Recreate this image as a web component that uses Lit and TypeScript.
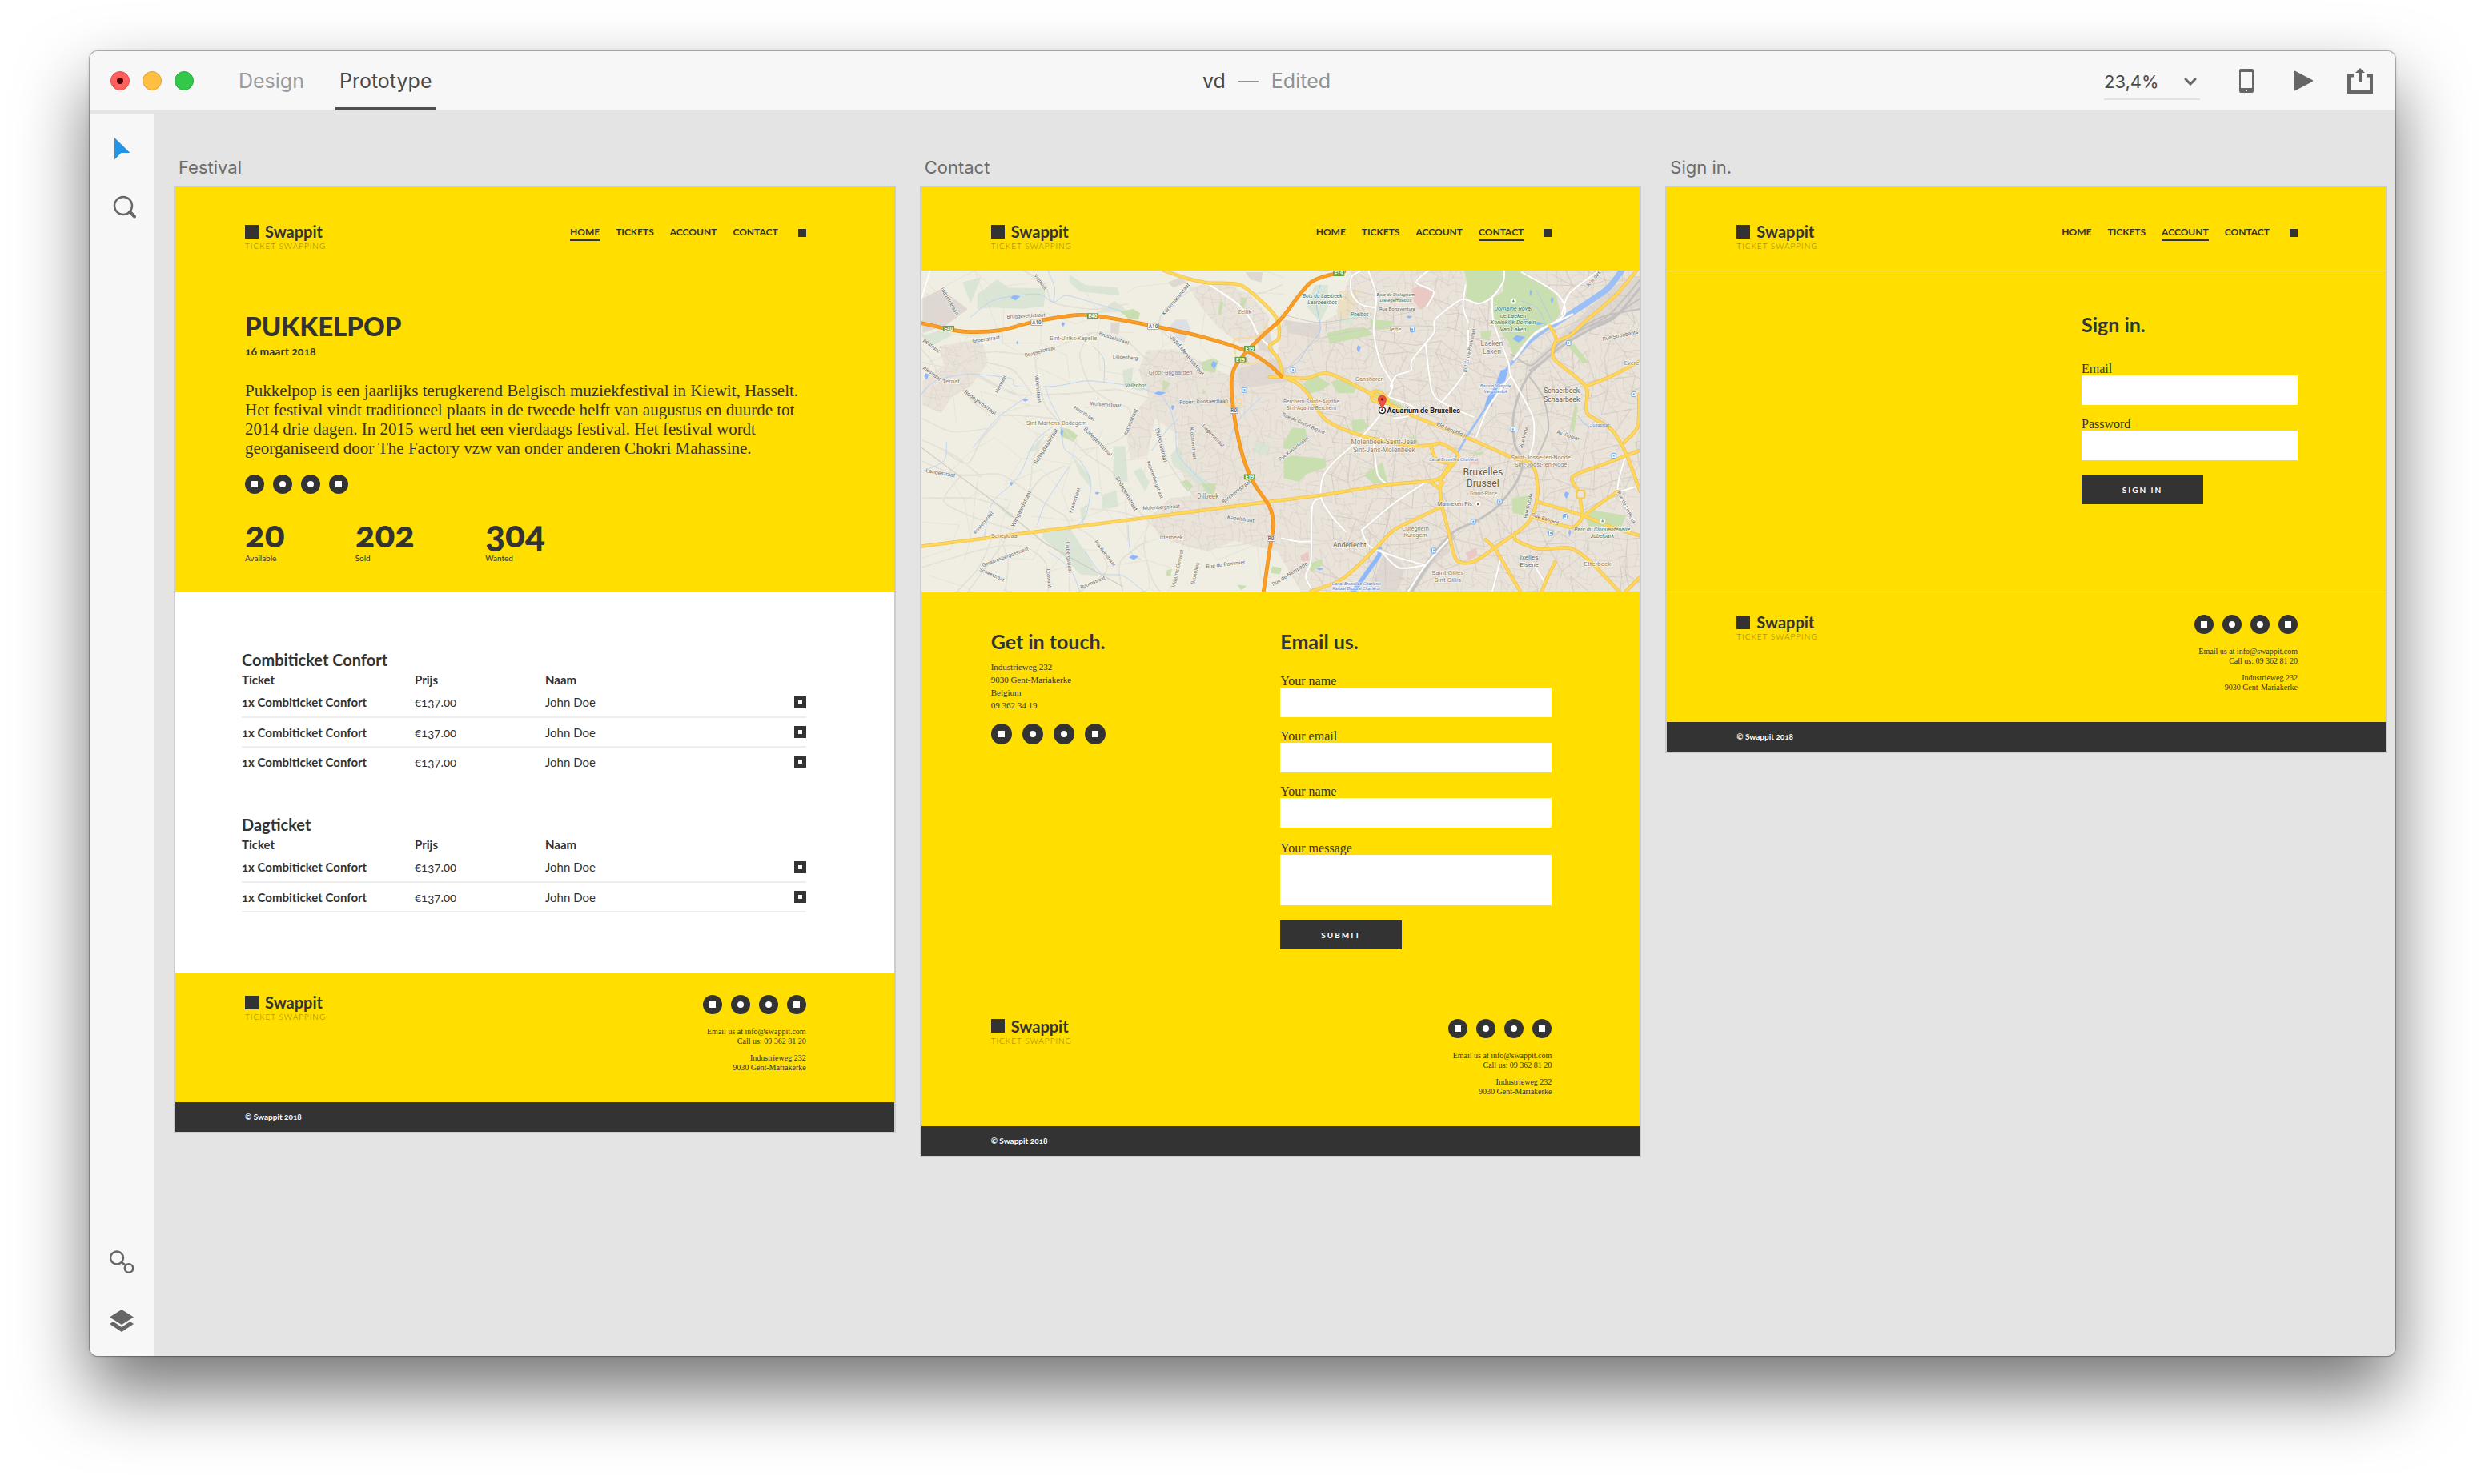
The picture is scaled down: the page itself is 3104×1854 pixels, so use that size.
import { LitElement, html, svg, css } from "lit";
import { customElement, property } from "lit/decorators.js";
import { classMap } from "lit/directives/class-map.js";

const sans = css`Lato, "Open Sans", sans-serif`;
const serif = css`"Liberation Serif", serif`;

type Point = [number, number];

/* ---------- Geometry helpers for the street map ---------- */

function parse(points: string): Point[] {
  return points.split(" ").map((p) => p.split(",").map(Number) as Point);
}

/* Catmull-Rom spline through the points, written as cubic curves. */
function smooth(points: string, dx = 0): string {
  const p = parse(points).map(([x, y]) => [x + dx, y] as Point);
  let d = `M${p[0][0]},${p[0][1]}`;
  for (let i = 0; i < p.length - 1; i++) {
    const a = p[i - 1] ?? p[i];
    const b = p[i];
    const c = p[i + 1];
    const e = p[i + 2] ?? c;
    const t = 7;
    d += `C${b[0] + (c[0] - a[0]) / t},${b[1] + (c[1] - a[1]) / t} ${c[0] - (e[0] - b[0]) / t},${c[1] - (e[1] - b[1]) / t} ${c[0]},${c[1]}`;
  }
  return d;
}

/* Irregular mesh of small streets inside a rectangle. */
function mesh(x0: number, y0: number, x1: number, y1: number, step: number, keep: number, seed: number): string {
  let s = seed;
  const rnd = () => {
    s = (s * 16807) % 2147483647;
    return s / 2147483647;
  };
  const cols = Math.ceil((x1 - x0) / step);
  const rows = Math.ceil((y1 - y0) / step);
  const grid: Point[][] = [];
  for (let r = 0; r <= rows; r++) {
    const row: Point[] = [];
    for (let c = 0; c <= cols; c++) {
      const x = x0 + c * step + (rnd() - 0.5) * step * 0.9 + Math.sin(r / 3) * step * 0.5;
      const y = y0 + r * step + (rnd() - 0.5) * step * 0.9 + Math.sin(c / 4) * step * 0.7;
      row.push([Math.round(x), Math.round(y)]);
    }
    grid.push(row);
  }
  let d = "";
  for (let r = 0; r < rows; r++) {
    for (let c = 0; c < cols; c++) {
      const [x, y] = grid[r][c];
      if (rnd() < keep) d += `M${x},${y}L${grid[r][c + 1].join()}`;
      if (rnd() < keep) d += `M${x},${y}L${grid[r + 1][c].join()}`;
      if (rnd() < keep * 0.2) d += `M${x},${y}L${grid[r + 1][c + 1].join()}`;
    }
  }
  return d;
}

const EAST = 1356;
const URBAN =
  "M850,305L960,300 1060,350 1160,400 1200,330 1280,290 1340,330 1356,200 1500,205 1600,150 1590,90 1620,6 2700,6 2700,1210 1430,1210 1340,1060 1180,1020 1080,1060 1000,1040 900,1010 860,930 940,860 1020,850 980,760 965,620 880,560 855,700 790,715 770,600 800,540 860,480 820,380Z" +
  "M1010,70L1140,50 1240,100 1310,180 1300,260 1200,280 1120,220 1060,150Z" +
  "M70,290L230,260 255,350 190,440 120,480 80,540 10,510 10,420 90,360Z";

const westStreets = [
  "6,240 60,300 100,330 140,375 200,390 280,430 370,472 600,465 740,452 880,490 1000,500 1160,480 1356,430",
  "6,350 180,390 290,440 380,475", "430,310 440,400 470,510 510,560 540,600 620,690 720,760 770,850 850,940 920,1000 1040,1045 1200,1035 1356,990",
  "135,375 190,330 280,310 400,320 520,290 640,240 760,260 830,320 900,380 1000,410 1150,405 1200,460",
  "500,560 380,550 280,545 200,500 150,430", "510,600 430,700 410,830 350,970 260,1100 180,1209",
  "6,720 150,775 300,770 410,840 500,900 560,960 560,1209", "780,130 650,150 500,125 470,60 390,6", "6,300 60,380 6,470",
  "1080,50 1000,90 920,150 900,220 990,310 1070,400", "880,480 900,600 930,720 1010,830 1100,880 1230,820",
  "620,520 750,510 790,540 770,620 700,660 600,680", "6,640 130,700 230,780", "150,780 90,870 200,930 380,990",
  "300,560 230,640 180,730 100,690", "540,740 460,780 410,840", "640,900 740,910 830,935", "640,240 600,320 640,440 720,500",
  "6,860 200,860 330,900", "480,1209 470,1100 380,1040 240,1050 6,1120", "600,1209 700,1130 660,1020 590,970",
  "1120,560 1090,640 1140,720 1220,760", "860,940 840,1040 870,1160 900,1209", "760,1209 750,1100 850,1020",
  "300,1000 330,1100 320,1209", "140,1209 220,1120 270,1010", "1356,60 1280,90 1150,90", "6,560 120,610 250,600", "420,470 350,380 250,350",
];

const streams = [
  "190,180 270,120 360,100 450,95 500,125 550,100 660,130 760,160", "500,125 505,70 480,6", "6,470 60,420 180,395 340,410 360,440 500,440 620,420 690,425 800,440 900,470",
  "470,440 490,500 530,580 540,670 600,720 640,800 620,930 560,980", "690,425 690,340 650,290", "960,610 940,530 900,465",
  "500,590 430,650 380,760 340,810 270,880 240,1010", "620,1060 680,1140 760,1150 840,1209", "870,680 930,600 970,560",
  "960,610 970,700 1060,800 1100,850", "600,1209 560,1120 480,1060", "100,650 90,720 6,760", "780,960 790,1060 830,1090",
  "1160,640 1200,560 1280,480", "200,670 290,560 400,480", "440,960 470,880 560,740",
];

const lightGreen =
  "M215,95L290,38 330,70 470,72 465,140 380,150 270,145 215,150ZM560,20L620,60 740,70 750,100 600,85 560,50ZM660,165L730,120 780,160ZM6,250L100,225 120,250 40,290Z" +
  "M760,380L800,370 795,420 860,440 830,460 765,440ZM725,665L770,665 780,800 725,790ZM940,700L970,660 990,720 1090,810 1060,830 1000,770 950,740ZM800,760L830,745 860,800 845,835ZM460,990L560,970 620,1060 670,1150 600,1145 540,1080 460,1010Z" +
  "M685,850L735,830 745,890 680,900ZM570,700L640,780 640,820 600,770ZM400,690L470,620 440,680ZM290,890L350,920 340,935ZM1255,650L1310,650 1310,700 1250,690ZM600,900L630,880 610,960ZM1480,60L1530,60 1530,140 1500,200 1450,140Z" +
  "M1560,150L1640,170 1620,210 1570,200ZM160,50L230,30 190,130Z";
const parks =
  "M750,160L800,150 825,165 820,190 780,185ZM1055,350L1100,335 1120,345 1105,390 1060,380ZM910,415L940,430 910,465ZM525,595L560,600 592,625 575,648 535,630ZM975,800L1000,790 1025,815 1005,835ZM1055,805L1110,805 1105,845 1075,840ZM1125,122L1138,125 1128,175 1118,170ZM1205,105L1225,110 1215,150 1198,145Z" +
  "M1320,1115L1356,1120 1350,1145 1315,1140ZM1190,1185L1225,1188 1205,1205ZM1060,450L1075,460 1060,470ZM925,1130L945,1125 940,1150 925,1150Z";
const eastParks =
  "M790,110L830,85 835,6 900,6 960,40 1030,100 1045,170 1000,220 900,285 870,330 850,270 800,210ZM685,6L832,6 830,60 790,108 730,132 690,105 695,55ZM170,240L250,222 310,218 345,245 260,265 180,280ZM80,430L125,395 182,432 150,455 100,470ZM185,425L240,408 283,440 270,465 210,466Z" +
  "M8,650L40,595 90,600 95,640 50,680 10,672ZM8,710L40,700 165,712 165,745 95,768 65,798 8,785ZM262,568L305,563 325,590 300,612 265,608ZM310,772L378,725 400,810 340,800ZM863,860L935,848 915,925 866,915ZM1140,935L1168,905 1290,925 1275,965 1150,965ZM745,235L790,230 780,262 748,260ZM330,190L420,195 410,225 340,230Z" +
  "M470,640L500,625 515,655 470,660ZM100,1105L150,1088 155,1110 110,1135ZM1085,590L1100,500 1110,520 1095,620ZM1075,290L1095,280 1150,350 1130,355ZM335,470L365,460 480,530 470,545ZM385,900L410,890 400,915ZM700,690L760,685 745,700Z";
const pinks = "M488,75L530,58 572,85 562,130 520,152 495,120ZM690,1065L730,1045 735,1075 700,1092ZM70,1075L100,1060 105,1095 75,1095ZM700,705L740,710 740,735 705,730Z";

const whiteRoads = [
  "300,6 262,30 262,90 295,132 350,145", "325,6 355,100 345,230 370,350 415,430 400,480 375,540 290,640 200,720 155,780 148,860 190,930 240,985",
  "550,6 505,50 570,85 545,140", "835,6 830,50 790,105 740,130 690,115 660,122 575,190 570,240 490,340 485,380 430,400 408,440",
  "540,280 565,460 620,510 720,555", "790,110 795,200 850,350 860,400 940,550 945,640 930,700", "860,400 775,520 730,630",
  "900,12 1030,90 1060,170 940,250 870,340", "148,860 115,890 110,1090 90,1150 110,1195", "475,1209 540,1110 630,1010",
  "1290,700 1260,830 1320,940", "300,980 420,880 540,800", "300,980 330,1040 430,1080 540,1110", "400,480 490,515 480,550 420,560",
  "1190,6 1080,90 1050,170", "345,640 360,770 400,810", "0,1010 60,1022 110,1022", "370,1055 440,1120 540,1110", "690,60 680,140 700,200",
  "1090,170 1060,185 950,240 880,330", "820,1090 790,1209", "940,1100 990,1180", "600,500 690,380 700,230", "1250,840 1344,812",
];

const yellowRoads = [
  smooth("6,1040 560,970 1330,870 1506,848 1746,810 1916,795 1961,780"),
  smooth("915,6 1000,35 1080,52 1200,60 1290,130 1340,190 1345,260 1310,290 1345,340 1361,400"),
  ...[
    "-46,405 0,405 90,410 150,392 200,400 330,465 480,545 690,630 860,705 940,735 960,840 925,950 800,1045 720,1097 655,1090 625,980 600,880 597,790 635,730",
    "0,385 10,405 60,430 100,470 165,565 300,625 480,662 560,660 600,655 660,695 640,735 600,780 565,800 590,820 605,800", "560,665 580,715 640,730",
    "1330,6 1250,100 1135,200 1080,250 1035,268", "1005,215 1028,260 1020,335 1140,440 1145,540 1235,600 1290,690 1344,835", "1140,440 1240,400 1344,345",
    "1340,470 1335,590 1285,650", "1344,680 1200,735 1090,780 1115,840 1128,930", "955,872 1130,925 1240,970 1344,1000", "1128,930 1180,890 1260,835",
    "940,930 1080,968 1115,950 1128,930", "765,1015 800,1050 860,1150 895,1209", "875,990 880,1018 965,1050 1080,1047 1150,1090 1200,1140 1265,1209",
    "1025,1100 995,1160 975,1209", "1344,1155 1290,1209", "600,892 520,930 420,980 350,1050 230,1160 110,1209", "335,470 350,458 375,465 400,490", "335,470 345,495 400,505",
  ].map((p) => smooth(p, EAST)),
];

const orangeRoads = [
  smooth("6,203 90,222 170,235 300,230 440,195 600,172 700,182 880,215 1060,255 1230,310 1310,360 1356,403"),
  smooth("1590,10 1466,50 1356,185 1290,245 1225,310 1180,370 1168,430 1180,560 1210,700 1250,800 1310,890 1325,960 1310,1060 1288,1212"),
];

/* text, x, y, size, tone, rotation */
type Label = [string, number, number, number, string, number];
const labels: Label[] = [
  ["Vrijthout", 452, 55, 18, "road", 55], ["Industrielaan", 112, 128, 20, "road", 60], ["Bruggeveldstraat", 398, 182, 19, "road", -3],
  ["Kortemansstraat", 960, 120, 20, "road", -50], ["Zellik", 1217, 167, 22, "town", 0], ["Groenstraat", 248, 270, 20, "road", -8],
  ["Sint-Ulriks-Kapelle", 575, 268, 22, "town", 0], ["Brusselstraat", 728, 266, 20, "road", 18], ["Brusselstraat", 450, 316, 20, "road", -15],
  ["Lindenberg", 770, 338, 19, "road", 4], ["Jozef Mertensstraat", 1002, 330, 21, "road", 51], ["Groot-Bijgaarden", 940, 396, 22, "town", 0],
  ["pestraat", 44, 294, 20, "road", 38], ["piestraat", 46, 398, 20, "road", 38], ["Ternat", 117, 430, 23, "town", 0], ["Heirbaan", 304, 436, 19, "road", -64],
  ["Molenstraat", 443, 455, 20, "road", 84], ["Vallenbos", 810, 443, 19, "wood", 0], ["Robert Dansaertlaan", 1064, 504, 20, "road", -2],
  ["Bodegemstraat", 226, 508, 21, "road", 36], ["Wolsemstraat", 697, 515, 19, "road", 4], ["Heerstraat", 616, 548, 19, "road", 32],
  ["Kattenstraat", 790, 580, 19, "road", -68], ["Sint-Martens-Bodegem", 512, 586, 22, "town", 0], ["Bodegemstraat", 668, 655, 21, "road", 46],
  ["Schepdaalstraat", 472, 672, 21, "road", -58], ["Stationsstraat", 905, 668, 21, "road", 76], ["Kloosterstraat", 1025, 660, 19, "road", 84],
  ["Liegemstraat", 1100, 632, 19, "road", 46], ["Langestraat", 78, 772, 21, "road", 10], ["Keperenbergstraat", 882, 796, 18, "road", 70],
  ["Dilbeek", 1080, 862, 25, "town", 0], ["Berchemstraat", 1186, 842, 20, "road", -38], ["Bodegemstraat", 775, 850, 21, "road", 60],
  ["Kraanstraat", 580, 874, 19, "road", -72], ["Molenbergstraat", 905, 900, 19, "road", -3], ["Wijngaardstraat", 380, 906, 21, "road", -64],
  ["Kapelstraat", 1203, 944, 20, "road", 8], ["Kosterstraat", 238, 958, 19, "road", -50], ["Schepdaal", 318, 1009, 22, "town", 0],
  ["Itterbeek", 943, 1014, 22, "town", 0], ["Geraardsbergsestraat", 320, 1086, 19, "road", -20], ["Lisbergstraat", 558, 1088, 20, "road", 84],
  ["Plankenstraat", 694, 1072, 19, "road", 52], ["Rue du Pommier", 1146, 1114, 20, "road", -7], ["Scheestraat", 270, 1152, 19, "road", 24],
  ["Lostraat", 484, 1166, 19, "road", 84], ["Roomstraat", 648, 1182, 19, "road", -22], ["Vlaams Gewest", 966, 1130, 21, "town", -77],
  ["Bruxelles", 1032, 1148, 21, "town", -77], ["Rue des", 1170 + EAST, 42, 20, "road", -50], ["Bois du Laerbeek", 153 + EAST, 107, 20, "wood", 0],
  ["Laarbeekbos", 153 + EAST, 131, 20, "wood", 0], ["Bois de Dieleghem", 428 + EAST, 102, 18, "wood", 0], ["Dielegemsebos", 428 + EAST, 122, 18, "wood", 0],
  ["Rue Bonaventure", 434 + EAST, 155, 18, "road", 0], ["Poelbos", 293 + EAST, 178, 19, "wood", 0], ["Jette", 424 + EAST, 233, 22, "town", 0],
  ["Domaine Royal", 868 + EAST, 157, 22, "wood", 0], ["de Laeken", 868 + EAST, 182, 22, "wood", 0], ["Koninklijk Domein", 868 + EAST, 208, 22, "wood", 0],
  ["Van Laken", 868 + EAST, 234, 22, "wood", 0], ["Laeken", 788 + EAST, 288, 26, "town", 0], ["Laken", 788 + EAST, 317, 26, "town", 0],
  ["Bld Emile Bockstael", 704 + EAST, 312, 19, "road", -78], ["Rue Stroobants", 1270 + EAST, 256, 20, "road", -12], ["Evere", 1312 + EAST, 361, 23, "town", 0],
  ["Ganshoren", 330 + EAST, 420, 22, "town", 0], ["Bassin Vergote", 803 + EAST, 445, 18, "water", 0], ["Vergotedok", 803 + EAST, 465, 18, "water", 0],
  ["Schaerbeek", 1050 + EAST, 466, 26, "city", 0], ["Schaarbeek", 1050 + EAST, 497, 26, "city", 0], ["Berchem-Sainte-Agathe", 111 + EAST, 504, 20, "town", 0],
  ["Sint-Agatha-Berchem", 111 + EAST, 529, 20, "town", 0], ["Rue de Grand-Bigard", 82 + EAST, 586, 19, "road", 24], ["Bld Leopold II", 638 + EAST, 611, 20, "road", 23],
  ["Josaphat", 1192 + EAST, 592, 18, "water", 0], ["Rue Verte", 908 + EAST, 638, 19, "road", -74], ["Av. Rogier", 1074 + EAST, 631, 20, "road", 18],
  ["Molenbeek-Saint-Jean", 384 + EAST, 657, 25, "town", 0], ["Sint-Jans-Molenbeek", 384 + EAST, 687, 25, "town", 0], ["Rue Kasterlinden", 45 + EAST, 680, 18, "road", -38],
  ["Canal Bruxelles Charleroi", 644 + EAST, 720, 17, "water", 0], ["Saint-Josse-ten-Noode", 972 + EAST, 715, 22, "town", 0], ["Sint-Joost-ten-Node", 972 + EAST, 740, 22, "town", 0],
  ["Bruxelles", 755 + EAST, 775, 37, "city", 0], ["Brussel", 755 + EAST, 817, 37, "city", 0],
  ["Grand-Place", 757 + EAST, 850, 19, "town", 0], ["Manneken Pis", 649 + EAST, 888, 21, "road", 0], ["Rue Ducale", 924 + EAST, 894, 19, "road", -76],
  ["Rue Belliard", 988 + EAST, 944, 20, "rust", 18], ["Rue de Linthout", 1292 + EAST, 900, 19, "road", 64], ["Parc du Cinquantenaire", 1202 + EAST, 983, 21, "wood", 0],
  ["Jubelpark", 1202 + EAST, 1008, 21, "wood", 0], ["Cureghem", 502 + EAST, 981, 22, "town", 0], ["Kuregem", 502 + EAST, 1006, 22, "town", 0],
  ["Anderlecht", 255 + EAST, 1043, 26, "city", 0], ["Ixelles", 928 + EAST, 1088, 24, "city", 0], ["Elsene", 928 + EAST, 1117, 24, "city", 0],
  ["Etterbeek", 1184 + EAST, 1114, 24, "town", 0], ["Saint-Gilles", 623 + EAST, 1145, 24, "town", 0], ["Sint-Gillis", 623 + EAST, 1174, 24, "town", 0],
  ["Rue de Neerpede", 30 + EAST, 1150, 20, "road", -32], ["Canal Bruxelles-Charleroi", 280 + EAST, 1185, 17, "water", 0], ["Kanaal Brussel Charleroi", 280 + EAST, 1203, 17, "water", 0],
];

const greenShields: [string, number, number][] = [["E40", 108, 223], ["E40", 648, 176], ["E19", 1236, 298], ["E19", 1202, 340], ["E19", 1236, 780], ["E19", 214 + EAST, 17]];
const whiteShields: [string, number, number][] = [["A10", 438, 200], ["A10", 875, 215], ["R0", 1177, 531], ["R0", 1316, 1011]];
const stations: Point[] = [[1217, 454], [1399, 379], [1846, 227], [2432, 278], [2676, 470], [2223, 602], [2601, 701], [2174, 873], [2419, 929], [2075, 948], [2365, 991], [1927, 1056]];
const ponds: [number, number, number, number][] = [[358, 108, 18, 10], [25, 403, 9, 13], [900, 467, 22, 8], [948, 520, 7, 10], [802, 1082, 18, 9], [343, 806, 7, 8], [665, 841, 10, 5], [537, 208, 7, 9], [1103, 360, 12, 15], [396, 492, 12, 5], [365, 277, 4, 7], [532, 615, 6, 16], [1645, 300, 8, 14], [2245, 262, 24, 14], [2270, 190, 10, 4], [2424, 848, 10, 14], [2436, 990, 5, 14], [1835, 180, 12, 5], [1500, 1125, 14, 5], [2370, 118, 6, 12], [2320, 205, 22, 6], [2290, 90, 5, 12]];

@customElement("city-map")
export class CityMap extends LitElement {
  static styles = css`
    :host { display: block; }
    svg { display: block; width: 100%; height: auto; font-family: Roboto, sans-serif; }
    .road { fill: #6b6964; }
    .town { fill: #94805f; }
    .city { fill: #6d5c42; }
    .wood { fill: #3f7558; font-style: italic; }
    .water { fill: #5b82c4; font-style: italic; }
    .rust { fill: #99602b; }
    .halo { stroke: #fff; stroke-opacity: 0.65; stroke-width: 4px; paint-order: stroke; }
    .shield { fill: #fff; font-weight: 700; }
    .line { fill: none; stroke-linejoin: round; stroke-linecap: round; }
  `;

  render() {
    return svg`
      <svg viewBox="6 6 2694 1203" preserveAspectRatio="xMidYMid slice" role="img" aria-label="Map of Brussels">
        <defs><clipPath id="urban"><path d=${URBAN} /></clipPath></defs>
        <rect x="0" y="0" width="2710" height="1220" fill="#f0eee2" />
        <path d=${URBAN} fill="#eae3da" />
        <path d="M10,110L80,75 180,150 100,210 10,240ZM1190,375L1340,335 1400,420 1200,450ZM1360,190L1500,210 1500,265 1380,240ZM1255,240L1310,230 1330,320 1270,300ZM715,200L750,200 745,245 715,240ZM930,50L980,30 1000,50 950,70ZM1220,12L1285,12 1280,50 1240,40ZM1960,1010L1990,1060 1900,1120ZM1740,1050L1820,1120 1790,1209 1680,1209 1720,1120ZM2600,60L2700,30 2700,140 2560,200 2420,280 2320,360 2260,380 2380,270Z" fill="#dfd8d2" />
        <path d=${lightGreen} fill="#dae5d6" />
        <path d=${parks} fill="#c9dfaf" />
        <path d="M940,210L960,190 1000,190 1015,225 990,275 955,260Z" fill="#dcdfe4" />
        <path d="M1570,85L1650,75 1640,130 1600,190 1565,180Z" fill="#ecdfc2" />
        <g clip-path="url(#urban)">
          <path class="line" d=${mesh(760, 0, 2700, 1210, 27, 0.62, 41)} stroke="#d9d1c8" stroke-width="2" />
          <path class="line" d=${mesh(1500, 0, 2700, 1210, 70, 0.6, 7)} stroke="#d0c8c0" stroke-width="2.5" />
          <path class="line" d=${mesh(0, 260, 260, 560, 22, 0.6, 99)} stroke="#ddd5cb" stroke-width="2" />
        </g>
        <path class="line" d=${mesh(0, 0, 1300, 1210, 105, 0.45, 1234)} stroke="#e0ddd2" stroke-width="2" />
        <path class="line" d=${westStreets.map((s) => smooth(s)).join("")} stroke="#d6d2c8" stroke-width="4" />
        <path class="line" d=${westStreets.map((s) => smooth(s)).join("")} stroke="#f8f7f2" stroke-width="1.5" />
        <path class="line" d=${streams.map((s) => smooth(s)).join("")} stroke="#b3cff5" stroke-width="2.5" />
        <path class="line" d="M6,670L300,890L470,1030L760,1190" stroke="#cfccc4" stroke-width="4" />
        <path class="line" d=${smooth("6,110 25,50 38,6")} stroke="#fff" stroke-width="5" />
        <path class="line" d=${smooth("1080,55 1190,130 1240,190 1270,250 1310,290")} stroke="#fff" stroke-width="6" />
        <g transform="translate(1356 0)">
          <path d=${eastParks} fill="#c9dfaf" />
          <path d=${pinks} fill="#eac9c5" />
          <path class="line" d=${smooth("0,395 130,270 260,235 420,215 560,215 660,230 730,290") + smooth("330,1209 400,930 420,760 440,600") + smooth("0,170 100,195 160,200 300,180")} stroke="#cfcbc6" stroke-width="3" />
          <path class="line" d=${smooth("1344,70 1250,180 1150,230 1050,290 960,365 925,400 890,470 868,560 875,660 905,720 880,800 810,890 740,940 640,990 560,1090 490,1209")} stroke="#c3c1bf" stroke-width="9" />
          <path class="line" d=${smooth("1344,40 1230,170 1120,230 1010,300 940,360 905,350 860,320") + smooth("1344,150 1200,180 1060,260 1000,330 930,380") + smooth("1344,110 1220,190 1080,240") + smooth("925,400 980,480 1000,600 960,700")} stroke="#c3c1bf" stroke-width="6" />
          <path class="line" d=${smooth("640,1005 590,1050 560,1090 500,1180 475,1209")} stroke="#c6c3c1" stroke-width="22" opacity="0.7" />
          <path class="line" d=${smooth("1275,6 1220,75 1110,150 1020,208")} stroke="#9bbff7" stroke-width="22" />
          <path class="line" d=${smooth("1020,208 930,275 850,368 835,385")} stroke="#9bbff7" stroke-width="11" />
          <path d="M822,380L850,376 838,420 812,440 788,516 760,518 772,480 800,440Z" fill="#8fb8fb" />
          <path class="line" d=${smooth("768,516 730,575 700,620 660,690 640,735 605,778 560,800")} stroke="#9bbff7" stroke-width="8" />
          <path class="line" d=${smooth("368,1050 365,1075 340,1110 290,1180 270,1209")} stroke="#8fb8fb" stroke-width="16" />
          <path class="line" d=${smooth("145,60 130,130 145,230 100,290 60,350 0,380") + smooth("900,120 960,150 990,210") + smooth("955,80 990,150 1010,190") + smooth("1110,550 1150,590 1230,590")} stroke="#a9c8f5" stroke-width="3" />
          <path class="line" d=${whiteRoads.map((s) => smooth(s)).join("")} stroke="#ddd8d0" stroke-width="9" />
          <path class="line" d=${whiteRoads.map((s) => smooth(s)).join("")} stroke="#fff" stroke-width="6" />
        </g>
        <path class="line" d="M1180,300Q1160,250 1230,260Q1290,250 1300,210M1180,290Q1180,390 1290,340M1145,500Q1150,520 1180,515Q1210,520 1205,490Q1190,480 1180,515" stroke="#f6d9a0" stroke-width="6" />
        <path class="line" d=${yellowRoads.join("")} stroke="#eec04f" stroke-width="13" />
        <path class="line" d=${yellowRoads.join("")} stroke="#ffd75a" stroke-width="9" />
        <rect x="2462" y="830" width="30" height="30" rx="8" fill="#eae3da" stroke="#f6cb52" stroke-width="7" />
        <path class="line" d=${orangeRoads.join("")} stroke="#e98d1b" stroke-width="14" />
        <path class="line" d=${orangeRoads.join("")} stroke="#fa9e25" stroke-width="10" />
        ${ponds.map(([x, y, w, h]) => svg`<path d="M${x - w},${y}L${x - w / 3},${y - h} ${x + w},${y - h / 2} ${x + w / 2},${y + h / 3} ${x},${y + h}Z" fill="#8fb8fb" />`)}
        ${stations.map(([x, y]) => svg`<rect x=${x - 8} y=${y - 9} width="16" height="18" rx="3" fill="#fff" stroke="#6aa9ea" stroke-width="3" /><rect x=${x - 3} y=${y - 4} width="6" height="7" fill="#6aa9ea" />`)}
        ${labels.map(([text, x, y, size, tone, turn]) => svg`<text class="halo ${tone}" x=${x} y=${y} font-size=${size} text-anchor="middle" transform="rotate(${turn} ${x} ${y - size / 3})">${text}</text>`)}
        ${greenShields.map(([text, x, y]) => svg`<rect x=${x - 21} y=${y - 10} width="42" height="20" fill="#6b9c46" /><text class="shield" x=${x} y=${y + 7} font-size="19" text-anchor="middle">${text}</text>`)}
        ${whiteShields.map(([text, x, y]) => svg`<rect x=${x - text.length * 7} y=${y - 11} width=${text.length * 14} height="22" fill="#fff" stroke="#8a8782" stroke-width="2" /><text class="road" x=${x} y=${y + 7} font-size="19" font-weight="700" text-anchor="middle">${text}</text>`)}
        ${[[2225, 121], [2559, 946]].map(([x, y]) => svg`<circle cx=${x} cy=${y} r="12" fill="#fff" stroke="#b5cf9b" stroke-width="2" /><path d="M${x},${y - 8}l5,11h-10Z" fill="#6fae3c" />`)}
        <circle cx="2093" cy="881" r="12" fill="#fff" stroke="#c9bdb0" stroke-width="2" /><rect x="2089" y="877" width="8" height="9" fill="#92643a" />
        <circle cx="1733" cy="530" r="12" fill="#fff" stroke="#222" stroke-width="4" />
        <circle cx="1733" cy="530" r="4" fill="#222" />
        <path d="M1733,526C1731,512 1718,504 1718,489A15,15 0 0 1 1748,489C1748,504 1735,512 1733,526Z" fill="#ee4f43" stroke="#b5362c" stroke-width="2" />
        <circle cx="1733" cy="489" r="5" fill="#7a1812" />
        <text class="halo" x="1751" y="539" font-size="27" font-weight="700" fill="#111">Aquarium de Bruxelles</text>
      </svg>
    `;
  }
}

@customElement("social-dots")
export class SocialDots extends LitElement {
  @property({ type: Boolean, reflect: true }) large = false;

  static styles = css`
    :host { display: flex; gap: 11px; }
    :host([large]) { gap: 13px; }
    .dot { display: grid; place-items: center; width: 24px; height: 24px; border-radius: 50%; background: #333; }
    :host([large]) .dot { width: 26px; height: 26px; }
    .mark { width: 8px; height: 8px; background: #fff; }
    .round { border-radius: 50%; }
  `;

  render() {
    return ["Facebook", "Twitter", "Instagram", "YouTube"].map(
      (name, i) => html`<a class="dot" href="#" aria-label=${name}><span class=${classMap({ mark: true, round: i === 1 || i === 2 })}></span></a>`,
    );
  }
}

@customElement("brand-logo")
export class BrandLogo extends LitElement {
  static styles = css`
    :host { display: block; font-family: ${sans}; color: #333; }
    .name { display: flex; align-items: center; gap: 8px; font-size: 20px; line-height: 18px; font-weight: 700; }
    .square { width: 17px; height: 17px; background: #333; }
    .tag { padding-top: 2px; font-size: 10px; line-height: 14px; letter-spacing: 1px; color: #8f7d06; font-weight: 300; }
  `;

  render() {
    return html`
      <div class="name"><span class="square"></span>Swappit</div>
      <div class="tag">TICKET SWAPPING</div>
    `;
  }
}

@customElement("site-header")
export class SiteHeader extends LitElement {
  @property() active = "";

  static styles = css`
    :host { display: block; font-family: ${sans}; }
    .bar { display: flex; justify-content: space-between; align-items: flex-start; height: 104px; box-sizing: border-box; padding: 46px 110px 0 87px; }
    nav { display: flex; align-items: center; gap: 20px; }
    a { padding: 2px 0 1px; border-bottom: 2px solid transparent; color: #333; font-size: 12px; line-height: 16px; font-weight: 700; text-decoration: none; }
    .current { border-color: #333; }
    .menu { width: 10px; height: 10px; margin-left: 5px; padding: 0; border: 0; background: #333; }
  `;

  render() {
    return html`
      <header class="bar">
        <brand-logo></brand-logo>
        <nav>
          ${["HOME", "TICKETS", "ACCOUNT", "CONTACT"].map((t) => html`<a href="#" class=${classMap({ current: t === this.active })}>${t}</a>`)}
          <button class="menu" aria-label="Menu"></button>
        </nav>
      </header>
    `;
  }
}

@customElement("site-footer")
export class SiteFooter extends LitElement {
  static styles = css`
    :host { display: block; color: #333; }
    .main { display: flex; justify-content: space-between; align-items: flex-start; height: 162px; box-sizing: border-box; padding: 28px 110px 0 87px; }
    .info { display: flex; flex-direction: column; align-items: flex-end; font: 10px/12px ${serif}; text-align: right; }
    p { margin: 0 0 9px; }
    social-dots { margin-bottom: 16px; }
    .legal { padding: 0 87px; background: #333; color: #fff; font: 700 10px/37px ${sans}; font-variant-numeric: oldstyle-nums; }
  `;

  render() {
    return html`
      <footer>
        <div class="main">
          <brand-logo></brand-logo>
          <div class="info">
            <social-dots></social-dots>
            <p>Email us at info@swappit.com<br />Call us: 09 362 81 20</p>
            <p>Industrieweg 232<br />9030 Gent-Mariakerke</p>
          </div>
        </div>
        <div class="legal">© Swappit 2018</div>
      </footer>
    `;
  }
}

@customElement("ticket-table")
export class TicketTable extends LitElement {
  @property() heading = "";
  @property({ type: Number }) rows = 0;
  @property({ type: Boolean, reflect: true }) closed = false;

  static styles = css`
    :host { display: block; font-family: ${sans}; color: #333; font-variant-numeric: oldstyle-nums; }
    table { width: 100%; table-layout: fixed; border-collapse: collapse; font-size: 15px; }
    caption { font-size: 20px; line-height: 24px; font-weight: 700; text-align: left; }
    th, td { padding: 0; text-align: left; font-weight: 400; }
    thead th { height: 23px; font-weight: 700; vertical-align: bottom; line-height: 20px; }
    tbody tr { height: 37px; border-bottom: 2px solid #eee; }
    tbody tr:last-child { border-bottom-color: transparent; }
    :host([closed]) tbody tr:last-child { border-bottom-color: #eee; }
    tbody th { font-weight: 700; }
    .ticket { width: 216px; }
    .price { width: 163px; }
    .action { width: 40px; }
    .open { display: grid; place-items: center; width: 15px; height: 15px; margin-left: auto; padding: 0; border: 0; background: #333; }
    .open::after { content: ""; width: 5px; height: 5px; background: #fff; }
  `;

  render() {
    return html`
      <table>
        <caption>${this.heading}</caption>
        <thead>
          <tr><th class="ticket">Ticket</th><th class="price">Prijs</th><th>Naam</th><td class="action"></td></tr>
        </thead>
        <tbody>
          ${Array.from({ length: this.rows }, () => html`
            <tr>
              <th>1x Combiticket Confort</th><td>€137.00</td><td>John Doe</td>
              <td><button class="open" aria-label="Open ticket"></button></td>
            </tr>`)}
        </tbody>
      </table>
    `;
  }
}

@customElement("app-root")
export class AppRoot extends LitElement {
  static styles = css`
    :host { display: flex; min-height: 100vh; box-sizing: border-box; padding: 64px 112px 160px; background: #fff; font-family: Inter, sans-serif; overflow: hidden; }
    button, select, input, textarea { font: inherit; margin: 0; padding: 0; border: 0; border-radius: 0; background: none; color: inherit; }
    h1, h2, p { margin: 0; }
    .window { flex: 1; min-width: 0; display: flex; flex-direction: column; border-radius: 10px; background: #e4e4e4; box-shadow: 0 0 0 1px rgba(0, 0, 0, 0.24), 0 0 4px rgba(0, 0, 0, 0.2), 0 44px 88px rgba(0, 0, 0, 0.55); }
    .toolbar { display: grid; grid-template-columns: 1fr auto 1fr; height: 74px; border-radius: 10px 10px 0 0; background: #f7f7f7; }
    .left { display: flex; padding-left: 26px; }
    .lights { display: flex; align-items: center; gap: 16px; margin-right: 51px; }
    .light { display: grid; place-items: center; width: 24px; height: 24px; box-sizing: border-box; border-radius: 50%; }
    .close { background: #ff605c; border: 1px solid #e04b47; }
    .close::after { content: ""; width: 8px; height: 8px; border-radius: 50%; background: #4c0000; }
    .min { background: #ffbf43; border: 1px solid #dfa036; }
    .max { background: #34c84a; border: 1px solid #25ab38; }
    .tabs { display: flex; }
    .tab { padding: 4px 5px 0; margin-right: 34px; border-bottom: 4px solid transparent; color: #9b9b9b; font-size: 25px; }
    .on { color: #4a4a4a; border-color: #4f4f4f; }
    .title { display: flex; align-items: center; gap: 16px; padding-left: 60px; font-size: 25px; color: #919191; }
    .title strong { font-weight: 400; color: #4a4a4a; }
    .right { display: flex; align-items: center; justify-content: flex-end; padding-right: 28px; }
    .zoom { display: grid; grid-template-columns: 120px; width: 120px; height: 42px; margin: 4px 49px 0 0; border-bottom: 2px solid #e2e2e2; align-items: center; }
    .zoom select { grid-area: 1 / 1; appearance: none; width: 100%; font-size: 22px; color: #4a4a4a; }
    .zoom svg { grid-area: 1 / 1; justify-self: end; margin-right: 4px; pointer-events: none; }
    .tool { display: block; }
    .tool svg, .zoom svg { display: block; }
    .device { margin-right: 50px; }
    .play { margin-right: 43px; }
    .body { flex: 1; display: grid; grid-template-columns: 80px minmax(0, 1fr); padding-top: 4px; }
    .side { display: flex; flex-direction: column; align-items: center; gap: 44px; padding: 29px 0 28px; border-radius: 0 0 0 10px; background: #f7f7f7; }
    .push { margin-top: auto; }
    .canvas { display: grid; grid-template-columns: repeat(3, minmax(0, 1fr)); gap: 30px; align-items: start; padding: 54px 10px 40px 25px; }
    .label { padding-left: 6px; font-size: 22px; line-height: 26px; margin-bottom: 10px; color: #6c6c6c; font-weight: 400; }
    .board { border: 2px solid #ccc; background: #ffde00; color: #333; font-family: ${sans}; }
    .hero { height: 401px; box-sizing: border-box; padding: 49px 110px 0 87px; }
    .hero h1 { font-size: 33px; line-height: 40px; font-weight: 900; }
    .date { font-size: 14px; line-height: 24px; font-weight: 700; font-variant-numeric: oldstyle-nums; }
    .intro { margin: 25px 0 21px; font: 21px/24px ${serif}; white-space: nowrap; }
    .stats { display: flex; gap: 88px; margin: 26px 0 0; font-variant-numeric: oldstyle-nums; }
    .stat { display: flex; flex-direction: column-reverse; }
    .stats dt { font-size: 10px; line-height: 12px; }
    .stats dd { margin: 0; font-size: 46px; line-height: 48px; font-weight: 900; }
    .tickets { display: grid; gap: 47px; padding: 73px 110px 75px 83px; background: #fff; }
    .contact { display: grid; grid-template-columns: minmax(0, 1fr) 339px; min-height: 506px; box-sizing: border-box; padding: 48px 110px 0 87px; }
    .heading { font-size: 25px; line-height: 28px; font-weight: 700; }
    .address { margin: 10px 0 15px; font: 11px/16px ${serif}; }
    .form { display: flex; flex-direction: column; }
    .form label { margin-top: 16px; font: 16px/16px ${serif}; }
    .form .first { margin-top: 28px; }
    .form .long { margin-top: 18px; }
    .field { display: block; width: 100%; height: 37px; background: #fff !important; }
    .area { height: 63px; resize: none; }
    .submit { width: 152px; height: 36px; margin-top: 19px; background: #333 !important; color: #fff !important; font: 700 10px/36px ${sans} !important; letter-spacing: 2px; }
    .signin { display: flex; justify-content: flex-end; height: 402px; box-sizing: border-box; padding: 52px 110px 0 0; border: solid #ffe645; border-width: 1px 0; }
    .signin .form { width: 270px; }
    .signin .heading { margin-bottom: 6px; }
  `;

  private field(id: string, label: string, type = "text", first = false) {
    return html`
      <label for=${id} class=${classMap({ first, long: type === "area" })}>${label}</label>
      ${type === "area"
        ? html`<textarea id=${id} class="field area"></textarea>`
        : html`<input id=${id} class="field" type=${type} />`}
    `;
  }

  render() {
    return html`
      <main class="window">
        <div class="toolbar">
          <div class="left">
            <div class="lights">
              <button class="light close" aria-label="Close"></button>
              <button class="light min" aria-label="Minimize"></button>
              <button class="light max" aria-label="Zoom window"></button>
            </div>
            <div class="tabs">
              <button class="tab">Design</button>
              <button class="tab on">Prototype</button>
            </div>
          </div>
          <div class="title"><strong>vd</strong><span>—</span><span>Edited</span></div>
          <div class="right">
            <div class="zoom">
              <select aria-label="Zoom level"><option>23,4%</option></select>
              <svg width="16" height="10" viewBox="0 0 16 10" fill="none" stroke="#666" stroke-width="3" stroke-linecap="round"><path d="M2,2L8,8L14,2" /></svg>
            </div>
            <button class="tool device" aria-label="Device preview">
              <svg width="18" height="30" viewBox="0 0 18 30"><path fill="#666" fill-rule="evenodd" d="M2,0H16A2,2 0 0 1 18,2V28A2,2 0 0 1 16,30H2A2,2 0 0 1 0,28V2A2,2 0 0 1 2,0ZM2,4V24H16V4ZM8,26V28H10V26Z" /></svg>
            </button>
            <button class="tool play" aria-label="Play">
              <svg width="24" height="26" viewBox="0 0 24 26"><path fill="#666" stroke="#666" stroke-width="2" stroke-linejoin="round" d="M1,1.5V24.5L23,13Z" /></svg>
            </button>
            <button class="tool" aria-label="Share">
              <svg width="32" height="32" viewBox="0 0 32 32" fill="none" stroke="#666" stroke-width="4"><path d="M8,9.5H2V30H30V9.5H24" /><path d="M16,18V5" /><path d="M10,6L16,0L22,6Z" fill="#666" stroke="none" /></svg>
            </button>
          </div>
        </div>
        <div class="body">
          <aside class="side">
            <button class="tool" aria-label="Select">
              <svg width="28" height="30" viewBox="0 0 28 30"><path fill="#2494e6" d="M5,1V28.5L13.5,20H24.5Z" /></svg>
            </button>
            <button class="tool" aria-label="Search">
              <svg width="24" height="28" viewBox="0 0 24 28" overflow="visible" fill="none" stroke="#666"><circle cx="14" cy="12" r="11" stroke-width="2.5" /><path d="M22,19.5L28,25.5" stroke-width="4" stroke-linecap="round" /></svg>
            </button>
            <button class="tool push" aria-label="Symbols">
              <svg width="30" height="30" viewBox="0 0 30 30" fill="none" stroke="#666" stroke-width="2.5"><circle cx="9" cy="9.5" r="8" /><circle cx="24" cy="22.5" r="5.2" /><path d="M15,15L20,19" /></svg>
            </button>
            <button class="tool" aria-label="Layers">
              <svg width="30" height="30" viewBox="0 0 30 30" fill="#666"><path d="M15,0L30,9.5L15,19L0,9.5Z" /><path d="M0,18L4.5,15L15,22L25.5,15L30,18L15,28Z" /></svg>
            </button>
          </aside>
          <div class="canvas">
            <section>
              <h2 class="label">Festival</h2>
              <article class="board">
                <site-header active="HOME"></site-header>
                <div class="hero">
                  <h1>PUKKELPOP</h1>
                  <p class="date">16 maart 2018</p>
                  <p class="intro">Pukkelpop is een jaarlijks terugkerend Belgisch muziekfestival in Kiewit, Hasselt.<br />Het festival vindt traditioneel plaats in de tweede helft van augustus en duurde tot<br />2014 drie dagen. In 2015 werd het een vierdaags festival. Het festival wordt<br />georganiseerd door The Factory vzw van onder anderen Chokri Mahassine.</p>
                  <social-dots></social-dots>
                  <dl class="stats">
                    ${[["20", "Available"], ["202", "Sold"], ["304", "Wanted"]].map(([n, l]) => html`<div class="stat"><dt>${l}</dt><dd>${n}</dd></div>`)}
                  </dl>
                </div>
                <div class="tickets">
                  <ticket-table heading="Combiticket Confort" rows="3"></ticket-table>
                  <ticket-table heading="Dagticket" rows="2" closed></ticket-table>
                </div>
                <site-footer></site-footer>
              </article>
            </section>
            <section>
              <h2 class="label">Contact</h2>
              <article class="board">
                <site-header active="CONTACT"></site-header>
                <city-map></city-map>
                <div class="contact">
                  <div>
                    <h2 class="heading">Get in touch.</h2>
                    <p class="address">Industrieweg 232<br />9030 Gent-Mariakerke<br />Belgium<br />09 362 34 19</p>
                    <social-dots large></social-dots>
                  </div>
                  <form class="form">
                    <h2 class="heading">Email us.</h2>
                    ${this.field("name", "Your name", "text", true)}
                    ${this.field("email", "Your email")}
                    ${this.field("name-2", "Your name")}
                    ${this.field("message", "Your message", "area")}
                    <button class="submit" type="button">SUBMIT</button>
                  </form>
                </div>
                <site-footer></site-footer>
              </article>
            </section>
            <section>
              <h2 class="label">Sign in.</h2>
              <article class="board">
                <site-header active="ACCOUNT"></site-header>
                <div class="signin">
                  <form class="form">
                    <h2 class="heading">Sign in.</h2>
                    ${this.field("login", "Email", "text", true)}
                    ${this.field("password", "Password", "password")}
                    <button class="submit" type="button">SIGN IN</button>
                  </form>
                </div>
                <site-footer></site-footer>
              </article>
            </section>
          </div>
        </div>
      </main>
    `;
  }
}
